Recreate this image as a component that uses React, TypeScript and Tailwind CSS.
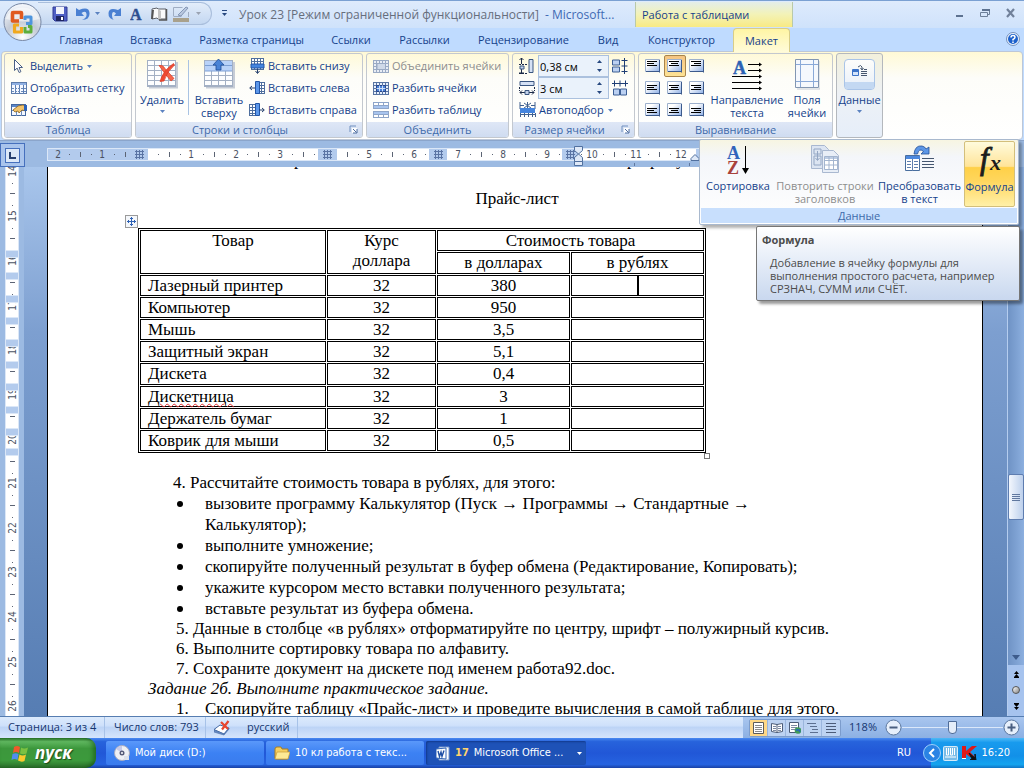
import type { ReactNode } from 'react';

const UI = "font-['Open_Sans','Noto_Sans',sans-serif]";
const DOC = "font-['Liberation_Serif',serif]";
const TASK = "font-['DejaVu_Sans_Condensed','DejaVu_Sans',sans-serif]";

/* ---------- small shared drawings ---------- */

function Caret({ color = '#5b82c0' }: { color?: string }) {
  return (
    <svg width="5" height="3" viewBox="0 0 5 3" aria-hidden="true" className="shrink-0">
      <path d="M0 0h5L2.5 3z" fill={color} />
    </svg>
  );
}

function Launcher() {
  return (
    <svg width="9" height="9" viewBox="0 0 9 9" aria-hidden="true">
      <path d="M1 7V1h6" stroke="#6f8fbf" fill="none" />
      <path d="M3 3h5v5H3z" fill="#fff" />
      <path d="M4 4l3.5 3.5M8 4v4H4" stroke="#4a6a9f" fill="none" />
    </svg>
  );
}

function lines(from: number, to: number, step: number) {
  const out: number[] = [];
  for (let v = from; v <= to; v += step) out.push(v);
  return out;
}

function GridArt({ x, y, w, h, cx, cy, stroke = '#8aa0bd', fill = '#fff' }: {
  x: number; y: number; w: number; h: number; cx: number; cy: number; stroke?: string; fill?: string;
}) {
  return (
    <g>
      <rect x={x + 0.5} y={y + 0.5} width={w} height={h} fill={fill} stroke={stroke} />
      {lines(x + 0.5 + cx, x + w, cx).map((v) => <path key={'v' + v} d={`M${v} ${y + 0.5}v${h}`} stroke={stroke} />)}
      {lines(y + 0.5 + cy, y + h, cy).map((v) => <path key={'h' + v} d={`M${x + 0.5} ${v}h${w}`} stroke={stroke} />)}
    </g>
  );
}

function Icon({ w = 16, h = 16, children }: { w?: number; h?: number; children: ReactNode }) {
  return <svg width={w} height={h} viewBox={`0 0 ${w} ${h}`} fill="none" aria-hidden="true" className="shrink-0">{children}</svg>;
}

/* ---------- ribbon icons ---------- */

const CursorIcon = () => (
  <Icon><path d="M3.5 1.5v11l2.6-2.4 2 4.4 1.8-.8-1.9-4.2h3.5z" fill="#fff" stroke="#4a5f86" /></Icon>
);
const ShowGridIcon = () => (
  <Icon>
    <rect x=".5" y="2.5" width="15" height="11" fill="#f4f8ff" stroke="#5d7cab" />
    <path d="M1 3h14v2H1z" fill="#8fb0e2" />
    <path d="M4.500 5v9M8.500 5v9M12.500 5v9" stroke="#5a7db4" /><path d="M1 8.500h14M1 11.500h14" stroke="#6c8cba" strokeDasharray="2 1" />
  </Icon>
);
const PropertiesIcon = () => (
  <Icon>
    <rect x=".5" y="2.500" width="14" height="11" fill="#f4f8ff" stroke="#44689f" />
    <path d="M1 3h14v2H1z" fill="#5a86c8" />
    <path d="M1 8.500h14M5.500 5v9M10.500 5v9" stroke="#6c8cba" />
    <path d="M2 8l5-4 5-1 3 1v5l-4-1-3 3-1-2-3 1z" fill="#f3c46b" stroke="#8b6420" strokeWidth=".8" />
    <path d="M13 3h3v6h-3z" fill="#2d63b8" />
  </Icon>
);
const DeleteTableIcon = () => (
  <Icon w={31} h={31}>
    <path d="M2 28.500h28V3" stroke="#c6ccd6" strokeWidth="2" />
    <GridArt x={0} y={1} w={28} h={26} cx={7} cy={5} stroke="#a3b0c4" fill="#fdfeff" />
    <path d="M12 6.500q4-1 6 3l9 10-3 2.500q-6-7-12-15.500z" fill="#f4664c" stroke="#dc3a22" strokeWidth=".7" />
    <path d="M26.500 4.500l1 1.500q-8 7-10.500 16l-4 .5q3-11 13.500-18z" fill="#ee4a33" stroke="#dc3a22" strokeWidth=".7" />
  </Icon>
);
const InsertAboveIcon = () => (
  <Icon w={31} h={31}>
    <path d="M2 28.500h28V3" stroke="#c6ccd6" strokeWidth="2" />
    <GridArt x={0} y={1} w={28} h={26} cx={7} cy={5} stroke="#a3b0c4" fill="#fdfeff" />
    <path d="M1 2h27v10H1z" fill="#b9d2f8" /><path d="M1 6.500h27M1 12h27" stroke="#7c9fd4" />
    <path d="M14.500 0l5.500 6h-3v5h-5V6H9z" fill="#4a83d6" stroke="#1e4c98" strokeWidth=".8" />
  </Icon>
);
const InsertBelowIcon = () => (
  <Icon>
    <GridArt x={2} y={0} w={12} h={11} cx={3} cy={3} stroke="#4f6f9e" />
    <path d="M2 6h13v4H2z" fill="#4585de" stroke="#2457a8" />
    <path d="M8.500 11v4M6.500 13l2 2.500 2-2.500" stroke="#26406d" />
  </Icon>
);
const InsertLeftIcon = () => (
  <Icon>
    <GridArt x={6} y={2} w={9} h={11} cx={3} cy={3} stroke="#4f6f9e" />
    <path d="M6.500 1.500h4v12h-4z" fill="#5d98ea" stroke="#2457a8" />
    <path d="M6 8H1M3 6L.7 8 3 10" stroke="#26406d" />
  </Icon>
);
const InsertRightIcon = () => (
  <Icon>
    <GridArt x={0} y={2} w={9} h={11} cx={3} cy={3} stroke="#4f6f9e" />
    <path d="M6.500 1.500h4v12h-4z" fill="#5d98ea" stroke="#2457a8" />
    <path d="M10 8h5M13 6l2.300 2L13 10" stroke="#26406d" />
  </Icon>
);
const MergeIcon = () => (
  <Icon><GridArt x={0} y={2} w={15} h={12} cx={3} cy={3} stroke="#9aaac4" fill="#e8edf5" /><path d="M4 5.500h8.500v6H4z" fill="#cfd9e8" stroke="#9aaac4" /></Icon>
);
const SplitCellsIcon = () => (
  <Icon><GridArt x={0} y={2} w={15} h={12} cx={3} cy={3} stroke="#5874a2" fill="#e8f0fb" /><path d="M3.500 5.500h9v6h-9z" fill="#4a82d8" stroke="#27468a" /><path d="M6.500 5.500v6M9.500 5.500v6M3.500 8.500h9" stroke="#cfe0fa" /></Icon>
);
const SplitTableIcon = () => (
  <Icon><GridArt x={0} y={0} w={15} h={6} cx={5} cy={3} stroke="#8ea5c9" /><GridArt x={0} y={9} w={15} h={6} cx={5} cy={3} stroke="#8ea5c9" /><path d="M1 4h14v2H1zM1 10h14v2H1z" fill="#a8c4ee" /></Icon>
);
const RowHeightIcon = () => (
  <Icon>
    <path d="M10 1.500h4v13h-4z" fill="#d5e1f4" stroke="#3a5680" />
    <path d="M2.500 0v6M.5 2l2-2 2 2M2.500 10v6M.5 14l2 2 2-2" stroke="#1c2b48" />
    <path d="M0 6.500h9M0 15.500h9" stroke="#1c2b48" strokeDasharray="2 1" />
    <path d="M1 8h4v3H1z" fill="#c3d2ea" stroke="#3a5680" />
  </Icon>
);
const ColWidthIcon = () => (
  <Icon>
    <path d="M1 1.500h14v4H1z" fill="#d5e1f4" stroke="#3a5680" />
    <path d="M1 12.500h5M3 10.500l-2 2 2 2M10 12.500h5M13 10.500l2 2-2 2" stroke="#1c2b48" />
    <path d="M.5 7v4M15.500 7v4" stroke="#1c2b48" strokeDasharray="2 1" />
    <path d="M6 10.500h4v4H6z" fill="#c3d2ea" stroke="#3a5680" />
  </Icon>
);
const AutoFitIcon = () => (
  <Icon w={17}>
    <path d="M1 0v7M16 0v7M1 3.500h4M12 3.500h4M8.500 0v7M5 1l7 5M12 1L5 6" stroke="#41618f" />
    <path d="M1 6h15v5H1z" fill="#4585de" />
    <path d="M1.500 11v4M5.500 11v4M9.500 11v4M13.500 11v4M16.500 11v4M1 12.500h16" stroke="#41618f" />
  </Icon>
);
const DistributeRowsIcon = () => (
  <Icon>
    <path d="M.5 2h7v5h-7zM.5 9h7v5h-7z" fill="#bcd1f2" stroke="#3d5f94" />
    <path d="M12.500 0v16M9.500 2.500h6M9.500 8h6M9.500 13.500h6" stroke="#1f3e75" />
  </Icon>
);
const DistributeColsIcon = () => (
  <Icon>
    <path d="M1.500 9h6v6h-6zM8.500 9h6v6h-6z" fill="#bcd1f2" stroke="#3d5f94" />
    <path d="M0 3.500h16M2.500.5v6M8 .5v6M13.500.5v6" stroke="#1f3e75" />
  </Icon>
);

function AlignIcon({ row, col }: { row: number; col: number }) {
  const y0 = [2.5, 4.5, 5.5][row];
  const widths = [10, 7, 10];
  return (
    <Icon w={16} h={14}>
      <defs><linearGradient id={`al${row}${col}`} x1="0" y1="0" x2="1" y2="1"><stop offset=".3" stopColor="#fff" /><stop offset="1" stopColor="#8fb0e6" /></linearGradient></defs>
      <path d="M.5.500h14v12H.5z" fill={`url(#al${row}${col})`} stroke="#9db0cc" />
      <path d="M14.500 1v12.500M1 12.500h14" stroke="#3c5a8c" />
      {widths.map((w, i) => {
        const x = col === 0 ? 2 : col === 1 ? Math.floor(7.5 - w / 2) : 12 - w;
        return <path key={i} d={`M${x} ${y0 + i * 2}h${w}`} stroke="#000" />;
      })}
    </Icon>
  );
}
const DirectionIcon = () => (
  <Icon w={31} h={32}>
    <text x="1" y="15" fontFamily="Liberation Serif" fontWeight="bold" fontSize="18" fill="#2c62b4" stroke="#2c62b4" strokeWidth=".4">A</text>
    <path d="M16 5.500h13M16 11.500h13M0 17.500h29M0 23.500h29M0 29.500h29" stroke="#000" />
    {[5.5, 11.5, 17.5, 23.5, 29.5].map((y) => <path key={y} d={`M27 ${y - 2}l3 2-3 2z`} fill="#000" />)}
  </Icon>
);
const MarginsIcon = () => (
  <Icon w={25} h={31}>
    <path d="M2 30h23V2" stroke="#c6ccd6" />
    <path d="M.5.500h23v28H.5z" fill="#f5f8fd" stroke="#8296b2" />
    <path d="M5.500 1v27M18.500 1v27M1 5.500h22M1 22.500h22" stroke="#8aa9d8" />
  </Icon>
);
const DataIcon = () => (
  <span className="flex h-[31px] w-[31px] flex-col overflow-hidden rounded-[4px] border border-[#a9c4e8] bg-gradient-to-b from-[#fdfdfb] to-[#e8eff9]">
    <span className="flex flex-1 items-center justify-center">
      <Icon w={16} h={12}>
        <path d="M.5 4.500h6v6h-6z" fill="#d4e4fb" stroke="#3c73c8" /><path d="M1 5h6v2H1z" fill="#3c73c8" />
        <path d="M6 2q3-3 4 0v2M8.500 3l1.500 2 1.500-2" stroke="#45566f" />
        <path d="M9 6.500h6M9 8.500h6M9 10.500h6M12 4.500h3" stroke="#45566f" />
      </Icon>
    </span>
    <span className="h-[7px] bg-[#c3d8f2]" />
  </span>
);
const SortIcon = () => (
  <Icon w={24} h={32}>
    <text x="1" y="14" fontFamily="Liberation Serif" fontWeight="bold" fontSize="18" fill="#3263bb">A</text>
    <text x="1" y="29" fontFamily="Liberation Serif" fontWeight="bold" fontSize="18" fill="#a8423c">Z</text>
    <path d="M19.500 1v24" stroke="#000" /><path d="M16 23h7l-3.500 6z" fill="#000" />
  </Icon>
);
const RepeatRowsIcon = () => (
  <Icon w={29} h={29}>
    <path d="M.5.500h13l4 4v19H.5z" fill="#dce5f2" stroke="#a9b8d0" />
    <path d="M3 4h7v5H3zM3 11h7v9H3zM6.500 6v9M4.500 13l2 2.500 2-2.500" stroke="#94a7c4" />
    <path d="M11.500 5.500h11l5 5v17h-16z" fill="#e8eef7" stroke="#a9b8d0" />
    <path d="M14 14h12v10H14z" fill="#fff" /><path d="M14 11h12v3H14z" fill="#bccce4" />
    <path d="M13.500 11.500h13v13h-13zM13.500 15.500h13M13.500 20h13M18 12v12M22.500 12v12" stroke="#a3b5cf" />
  </Icon>
);
const ConvertIcon = () => (
  <Icon w={29} h={29}>
    <path d="M9 9Q10 0 17 1q3 .5 4 3l3-2v7h-8l2.500-2.500Q14 2.500 12.500 9z" fill="#5c96e6" stroke="#245097" strokeWidth=".8" />
    <path d="M.5 10.500h14v15H.5z" fill="#fff" stroke="#496e9e" /><path d="M1 11h14v3H1z" fill="#4c88de" />
    <path d="M2 16.500h4M9 16.500h4M2 19.500h4M9 19.500h4M2 22.500h4M9 22.500h4M7.500 14v12" stroke="#5f7fae" />
    <path d="M17 13.500h12M17 16.500h12M17 19.500h12M17 22.500h12" stroke="#45566f" />
  </Icon>
);
const FormulaIcon = () => (
  <Icon w={30} h={34}>
    <text x="5" y="23" fontFamily="Liberation Serif" fontStyle="italic" fontSize="31" fill="#1c1c1c" stroke="#1c1c1c" strokeWidth=".9">f</text>
    <text x="15" y="24" fontFamily="Liberation Serif" fontStyle="italic" fontWeight="bold" fontSize="22" fill="#1c1c1c">x</text>
  </Icon>
);

/* ---------- title bar ---------- */

function OfficeOrb() {
  return (
    <button type="button" aria-label="Office" className="absolute left-[3px] top-[2px] z-20 h-[40px] w-[40px] rounded-full">
      <svg width="40" height="40" viewBox="0 0 40 40" aria-hidden="true">
        <defs>
          <radialGradient id="orb" cx=".5" cy=".9" r=".85"><stop offset="0" stopColor="#fff" /><stop offset=".5" stopColor="#c3cad6" /><stop offset="1" stopColor="#f2f5fa" /></radialGradient>
        </defs>
        <circle cx="19.500" cy="20" r="18.500" fill="url(#orb)" stroke="#7888a5" />
        <path d="M3 17a17 15 0 0 1 33 0q-16 5-33 0z" fill="#fff" opacity=".5" />
        <g fill="none" strokeWidth="3.600" strokeLinejoin="round">
          <path d="M16 19h-6.500v-8q0-.5.5-.5h8q.5 0 .5.5v6" stroke="#e05a20" />
          <path d="M22 18v-3h6v6.500h-5" stroke="#4f95dd" strokeWidth="3" />
          <path d="M16 23h-4.500v7h7v-5" stroke="#f0a81f" strokeWidth="3.200" />
          <path d="M22 25v5h6v-5.500h-3" stroke="#5cae3c" strokeWidth="3" />
        </g>
      </svg>
    </button>
  );
}

function QuickAccess() {
  return (
    <div className="ml-[38px] flex h-[23px] w-[174px] items-center rounded-r-full border border-l-0 border-[#a9bedc] bg-gradient-to-b from-[#e3edfa] to-[#c3d7f1] pl-[14px]">
      <button type="button" aria-label="Сохранить" className="flex w-[24px] justify-start">
        <Icon><path d="M1 1h14v14H3l-2-2z" fill="#4f5fc4" stroke="#303a94" /><path d="M4 1h8v7H4z" fill="#f1f3fb" /><path d="M4 10h8v5H4z" fill="#1e2561" /><path d="M9 11h2v3H9z" fill="#fff" /></Icon>
      </button>
      <button type="button" aria-label="Отменить" className="flex w-[19px]">
        <Icon w={14} h={14}><path d="M0 1v8h8L5.500 6Q10 3 10.500 7T6 13Q14 13 13.500 6T3 3z" fill="#4a80d2" /></Icon>
      </button>
      <button type="button" aria-label="Список отмены" className="flex w-[13px]"><Caret /></button>
      <button type="button" aria-label="Повторить" className="flex w-[22px]">
        <Icon w={13} h={14}><path d="M13 1v8H6l2-2.500Q4 3 4 8t3 5Q0 12 .5 6T10 3z" fill="#4a80d2" /></Icon>
      </button>
      <button type="button" aria-label="Шрифт" className="flex w-[21px]">
        <Icon w={14} h={20}><text x="0" y="16" fontFamily="Liberation Serif" fontWeight="bold" fontSize="16" fill="#2d4e8f" stroke="#2d4e8f" strokeWidth=".4">A</text></Icon>
      </button>
      <button type="button" aria-label="Справочник" className="flex w-[22px]">
        <Icon w={17} h={14}><path d="M1 2l5-1 1 1h8v10H7l-1-1-5 1z" fill="#fafafa" stroke="#5d6169" /><path d="M7 2l3 2v9l-3-1z" fill="#c4c4c4" /><path d="M15.500 2v11H8" stroke="#555" strokeWidth="1.500" /><path d="M1 12l1-9" stroke="#555" strokeWidth="2" /></Icon>
      </button>
      <button type="button" aria-label="Цвет границы" className="flex w-[23px]">
        <Icon w={17} h={16}><path d="M.5 10V1.500h9M.5 10.500h8M15.500 6v5" stroke="#9fadc3" /><path d="M5 9l8-8 2 1-7 8z" fill="#b9c8e0" stroke="#8497b6" /><path d="M0 12h16v4H0z" fill="#a9a18c" /></Icon>
      </button>
      <Caret color="#9aa3b2" />
    </div>
  );
}

function TitleBar() {
  return (
    <header className="flex h-[28px] items-start border-t border-[#7aa0d2] bg-gradient-to-b from-[#deebfc] to-[#cfe2fb] pt-[1px]">
      <QuickAccess />
      <button type="button" aria-label="Настройка панели" className="ml-[7px] flex h-[22px] w-[10px] flex-col items-center justify-center gap-[2px]">
        <span className="h-px w-[5px] bg-[#27487f]" /><Caret color="#27487f" />
      </button>
      <h1 className={`${UI} ml-[10px] flex w-[396px] gap-[6px] whitespace-nowrap text-[12px] leading-[26px] text-[#666e7c]`}>
        <span>Урок 23 [Режим ограниченной функциональности]</span><span className="text-[#3f6ab4]">- Microsoft...</span>
      </h1>
      <div className={`${UI} h-[25px] w-[158px] border-x border-[#b9c9a9] bg-gradient-to-b from-[#e4eee9] via-[#f3f2b6] to-[#f8ea83] pl-[6px] text-[11px] leading-[26px] text-[#15428b]`}>Работа с таблицами</div>
      <div className="ml-auto flex h-[22px] items-center gap-[16px] pr-[8px]">
        <button type="button" aria-label="Свернуть"><Icon w={9} h={10}><path d="M1 8h7" stroke="#5d7290" strokeWidth="2" /></Icon></button>
        <button type="button" aria-label="Восстановить"><Icon w={10} h={10}><path d="M2.500 2.500h7v4h-2M.5 4.500h7v4h-7z" stroke="#6c7f99" /><path d="M2 2h8" stroke="#5d7290" strokeWidth="2" /></Icon></button>
        <button type="button" aria-label="Закрыть"><Icon w={10} h={10}><path d="M1 1l7 8M8 1L1 9" stroke="#71819a" strokeWidth="2.200" /></Icon></button>
      </div>
    </header>
  );
}

/* ---------- tabs ---------- */

const tabs = [
  ['Главная', 'w-[70px]'], ['Вставка', 'w-[70px]'], ['Разметка страницы', 'w-[131px]'], ['Ссылки', 'w-[68px]'],
  ['Рассылки', 'w-[79px]'], ['Рецензирование', 'w-[119px]'], ['Вид', 'w-[50px]'], ['Конструктор', 'w-[97px]'],
];

function Tabs() {
  return (
    <nav className={`${UI} flex h-[23px] bg-[#bfdbff] pl-[46px] text-[11px] leading-[24px] text-[#15428b]`}>
      {tabs.map(([t, w]) => <button key={t} type="button" className={`${w} whitespace-nowrap text-center`}>{t}</button>)}
      <button type="button" className="relative ml-[3px] h-[24px] w-[57px] rounded-t-[4px] border border-b-0 border-[#d8cd88] bg-gradient-to-b from-[#fff5a4] to-[#fffbd9] leading-[22px]">Макет</button>
      <button type="button" aria-label="Справка" className="ml-auto mr-[4px] mt-[3px] h-[15px]">
        <Icon w={14} h={14}><circle cx="7" cy="7" r="6.500" fill="#e9f1fc" stroke="#7692bd" /><circle cx="7" cy="7" r="5" fill="#1d61cb" /><path d="M5 5.500q0-2 2-2t2 1.700Q9 6.500 7 7.500v1M7 9.500v1.500" stroke="#fff" strokeWidth="1.500" /></Icon>
      </button>
    </nav>
  );
}

/* ---------- ribbon ---------- */

function Group({ title, width, launcher, children }: { title: string; width: string; launcher?: boolean; children: ReactNode }) {
  return (
    <section className={`${width} flex h-[85px] shrink-0 flex-col overflow-hidden rounded-[3px] border border-[#c3c8cf]`}>
      <div className="flex flex-1 pt-px">{children}</div>
      <div className="relative h-[15px] bg-gradient-to-b from-[#dfe7f6] to-[#cfdcf1] text-center leading-[15px] text-[#3e6aaa]">
        <span className={launcher ? 'pr-[18px]' : ''}>{title}</span>
        {launcher && <button type="button" aria-label={`${title}: параметры`} className="absolute right-[4px] top-[3px]"><Launcher /></button>}
      </div>
    </section>
  );
}

function Row({ icon, label, caret, disabled }: { icon: ReactNode; label: string; caret?: boolean; disabled?: boolean }) {
  return (
    <button type="button" disabled={disabled} className={`flex h-[22px] items-center gap-[3px] whitespace-nowrap ${disabled ? 'text-[#8d8d8d]' : ''}`}>
      {icon}<span>{label}</span>{caret && <span className="pl-[1px]"><Caret /></span>}
    </button>
  );
}

function Big({ icon, label, width, caret, disabled }: { icon: ReactNode; label: string[]; width: string; caret?: boolean; disabled?: boolean }) {
  return (
    <button type="button" disabled={disabled} className={`${width} flex shrink-0 flex-col items-center whitespace-nowrap pt-[4px] leading-[13px] ${disabled ? 'text-[#8d8d8d]' : ''}`}>
      <span className="flex h-[34px] items-start">{icon}</span>
      {label.map((l) => <span key={l}>{l}</span>)}
      {caret && <span className="pt-[4px]"><Caret /></span>}
    </button>
  );
}

function Spin({ label, value }: { label: string; value: string }) {
  return (
    <div className="flex h-[22px] w-[71px] items-center border border-[#abc1de] bg-[#eaf2fb]">
      <input aria-label={label} defaultValue={value} className="h-[18px] w-[58px] bg-transparent pl-px text-[11px] text-black outline-none" />
      <span className="flex flex-col gap-[6px]">
        <button type="button" aria-label="Больше" className="h-[3px]"><svg width="5" height="3" viewBox="0 0 5 3" className="block"><path d="M0 3h5L2.500 0z" fill="#27487f" /></svg></button>
        <button type="button" aria-label="Меньше" className="flex h-[3px]"><Caret color="#27487f" /></button>
      </span>
    </div>
  );
}

function Ribbon() {
  return (
    <div className={`${UI} mx-[1px] flex h-[89px] gap-[3px] rounded-[4px] border border-[#bcc7d8] bg-gradient-to-b from-[#fff9d5] via-[#fdfdf9] via-30% to-white p-px pl-[2px] text-[11px] text-[#15428b]`}>
      <Group title="Таблица" width="w-[128px]">
        <div className="flex flex-col pl-[6px]">
          <Row icon={<CursorIcon />} label="Выделить" caret />
          <Row icon={<ShowGridIcon />} label="Отобразить сетку" />
          <Row icon={<PropertiesIcon />} label="Свойства" />
        </div>
      </Group>
      <Group title="Строки и столбцы" width="w-[228px]" launcher>
        <Big icon={<DeleteTableIcon />} label={['Удалить']} width="w-[52px]" caret />
        <span className="mt-[5px] h-[55px] w-px bg-[#a9c3e3]" />
        <Big icon={<InsertAboveIcon />} label={['Вставить', 'сверху']} width="w-[60px]" />
        <div className="flex flex-col">
          <Row icon={<InsertBelowIcon />} label="Вставить снизу" />
          <Row icon={<InsertLeftIcon />} label="Вставить слева" />
          <Row icon={<InsertRightIcon />} label="Вставить справа" />
        </div>
      </Group>
      <Group title="Объединить" width="w-[143px]">
        <div className="flex flex-col pl-[6px]">
          <Row icon={<MergeIcon />} label="Объединить ячейки" disabled />
          <Row icon={<SplitCellsIcon />} label="Разбить ячейки" />
          <Row icon={<SplitTableIcon />} label="Разбить таблицу" />
        </div>
      </Group>
      <Group title="Размер ячейки" width="w-[123px]" launcher>
        <div className="flex flex-col pl-[6px]">
          <div className="flex h-[22px] items-center gap-[3px]"><RowHeightIcon /><Spin label="Высота строки" value="0,38 см" /><button type="button" aria-label="Выровнять высоту строк"><DistributeRowsIcon /></button></div>
          <div className="flex h-[22px] items-center gap-[3px]"><ColWidthIcon /><Spin label="Ширина столбца" value="3 см" /><button type="button" aria-label="Выровнять ширину столбцов"><DistributeColsIcon /></button></div>
          <Row icon={<AutoFitIcon />} label="Автоподбор" caret />
        </div>
      </Group>
      <Group title="Выравнивание" width="w-[195px]">
        <div className="grid h-[66px] w-[69px] shrink-0 grid-cols-[22px_22px_22px] grid-rows-3 pl-[3px]">
          {[0, 1, 2].flatMap((r) => [0, 1, 2].map((c) => (
            <button key={`${r}${c}`} type="button" aria-label={`Выравнивание ${r + 1}.${c + 1}`} className={`flex items-center justify-center ${r === 0 && c === 1 ? 'rounded-[2px] border border-[#a8854b] bg-gradient-to-b from-[#f5c583] to-[#fde394]' : ''}`}><AlignIcon row={r} col={c} /></button>
          )))}
        </div>
        <Big icon={<DirectionIcon />} label={['Направление', 'текста']} width="w-[78px]" />
        <Big icon={<MarginsIcon />} label={['Поля', 'ячейки']} width="w-[42px]" />
      </Group>
      <section className="flex h-[85px] w-[47px] justify-center rounded-[3px] border border-[#b4b8bd] bg-gradient-to-b from-[#f2f0dc] via-[#edf1f6] to-[#e6eef9] pt-px">
        <Big icon={<DataIcon />} label={['Данные']} width="w-[45px]" caret />
      </section>
    </div>
  );
}

function DataPanel() {
  return (
    <div className={`${UI} absolute right-[5px] top-[139px] z-30 flex h-[86px] w-[320px] flex-col rounded-[2px] border border-[#a9b9ce] bg-gradient-to-b from-[#f7f5e2] via-[#f4f6fa] via-20% to-white p-px text-[11px] text-[#15428b] shadow-[3px_3px_3px_rgba(0,0,0,0.3)]`}>
      <div className="flex flex-1">
        <Big icon={<SortIcon />} label={['Сортировка']} width="w-[74px]" />
        <Big icon={<RepeatRowsIcon />} label={['Повторить строки', 'заголовков']} width="w-[100px]" disabled />
        <Big icon={<ConvertIcon />} label={['Преобразовать', 'в текст']} width="w-[89px]" />
        <div className="flex h-[66px] w-[51px] justify-center rounded-[2px] border border-[#d3bf7b] bg-[linear-gradient(#fffbdc,#ffe49a_38%,#ffd048_40%,#ffd65c_60%,#fff0a8)]">
          <Big icon={<FormulaIcon />} label={['Формула']} width="w-[49px]" />
        </div>
      </div>
      <div className="h-[15px] bg-[#c8dffd] text-center leading-[15px] text-[#3e6aaa]">Данные</div>
    </div>
  );
}

function Tip() {
  return (
    <div role="tooltip" className={`${UI} absolute right-[4px] top-[226px] z-40 h-[75px] w-[264px] rounded-[2px] border border-[#767676] bg-gradient-to-b from-white to-[#c9d8ef] px-[5px] pt-[6px] text-[11px] leading-[13px] text-[#4c4c4c] shadow-[3px_3px_3px_rgba(0,0,0,0.4)]`}>
      <p className="font-bold">Формула</p>
      <p className="whitespace-nowrap pl-[8px] pt-[10px]">Добавление в ячейку формулы для<br />выполнения простого расчета, например<br />СРЗНАЧ, СУММ или СЧЁТ.</p>
    </div>
  );
}

/* ---------- rulers ---------- */

const hNumbers: [string, number][] = [['2', 58], ['1', 102], ['1', 191], ['2', 236], ['3', 280], ['5', 369], ['6', 414], ['7', 458], ['8', 503], ['9', 547], ['10', 592], ['11', 636], ['12', 681]];
const hMarks = [139, 327, 438, 570];
const hidden = (x: number) => hMarks.some((m) => Math.abs(m - x) < 10);

function HRuler() {
  const ticks: number[] = lines(80, 680, 44.5);
  const dots = lines(69, 690, 44.5).concat(lines(91, 690, 44.5));
  return (
    <div className="flex h-[27px] shrink-0 border-t border-[#8ba5cb] bg-[#9cbae2]">
      <button type="button" aria-label="Тип табуляции" className="mt-[2px] flex h-[24px] w-[25px] items-center justify-center border border-[#4670bd] bg-[#a9c4ec]">
        <span className="flex h-[15px] w-[15px] items-center justify-center border border-[#4670bd] bg-[#dce8f8]"><Icon w={7} h={7}><path d="M1 0v6h6" stroke="#27406f" strokeWidth="2" /></Icon></span>
      </button>
      <svg width="970" height="26" viewBox="25 141 970 26" className="overflow-hidden" aria-hidden="true">
        <rect x="47.500" y="148.500" width="770" height="12" fill="#b3cbed" stroke="#dbe7f7" />
        {[[148, 170], [337, 92], [447, 115], [579, 117]].map(([x, w]) => <rect key={x} x={x} y="149" width={w} height="11" fill="#fff" />)}
        {hMarks.map((x) => <path key={x} d={`M${x - 2.5} 150v9M${x + 0.5} 150v9M${x + 3.5} 150v9M${x - 4} 151.500h9M${x - 4} 154.500h9M${x - 4} 157.500h9`} stroke="#5a74a4" fill="none" />)}
        {ticks.filter((x) => !hidden(x)).map((x) => <path key={x} d={`M${Math.round(x) + 0.5} 152v5`} stroke="#5c6474" />)}
        {dots.filter((x) => !hidden(x)).map((x) => <rect key={x} x={Math.round(x)} y="154" width="1" height="1" fill="#5c6474" />)}
        {hNumbers.map(([n, x]) => <text key={x} x={x} y="158" textAnchor="middle" fontSize="10" fontFamily="DejaVu Sans Condensed, DejaVu Sans" fill="#4a5263">{n}</text>)}
        <path d="M574.500 146.500h8v4l-4 3.500-4-3.500zM574.500 161.500v-4l4-3.500 4 3.500v4zM574.500 161.500h8v4h-8z" fill="#dfe9f8" stroke="#51709f" />
        <path d="M691 160.500v-2l4-4 4 4v2z" fill="#dfe9f8" stroke="#51709f" />
        <path d="M634.500 163v3M689.500 163v3" stroke="#5f789f" />
      </svg>
    </div>
  );
}

function VRuler() {
  const numbers = lines(14, 26, 1).map((n) => [n, Math.round(171 + (n - 14) * 44.6)] as const);
  return (
    <div className="w-[24px] shrink-0 bg-[#9cbae2]">
      <svg width="24" height="560" viewBox="0 167 24 560" aria-hidden="true">
        <rect x="5" y="160" width="14" height="570" fill="#dbe7f7" />
        <rect x="6" y="160" width="12" height="570" fill="#fff" />
        {lines(183, 720, 44.6).concat(lines(205, 720, 44.6)).map((y) => <rect key={y} x="12" y={Math.round(y)} width="1" height="1" fill="#5c6474" />)}
        {lines(193, 720, 44.6).map((y) => <path key={y} d={`M10 ${Math.round(y) + 0.5}h5`} stroke="#5c6474" />)}
        {numbers.map(([n, y]) => <text key={n} transform={`translate(16 ${y}) rotate(-90)`} textAnchor="middle" fontSize="10" fontFamily="DejaVu Sans Condensed, DejaVu Sans" fill="#4a5263">{n}</text>)}
        {[250, 272, 295, 317, 339, 361, 383, 406, 428, 448].map((y) => <rect key={y} x="5.500" y={y + 0.5} width="13" height="7" fill="#b3cbed" stroke="#dbe7f7" />)}
      </svg>
    </div>
  );
}

/* ---------- document ---------- */

const goods = [
  ['Лазерный принтер', '380'], ['Компьютер', '950'], ['Мышь', '3,5'], ['Защитный экран', '5,1'],
  ['Дискета', '0,4'], ['Дискетница', '3'], ['Держатель бумаг', '1'], ['Коврик для мыши', '0,5'],
];
const CELL = 'border border-black p-0 font-normal';

function PriceTable() {
  return (
    <div className="relative ml-[90px] mt-[19px] w-[568px]">
      <button type="button" aria-label="Переместить таблицу" className="absolute -left-[13px] -top-[13px] flex h-[13px] w-[13px] items-center justify-center border border-[#9a9a9a] bg-[#f4f7fb]">
        <Icon w={9} h={9}><path d="M4.500 0v9M0 4.500h9M3 1.500h3M3 7.500h3M1.500 3v3M7.500 3v3" stroke="#2f62b5" /></Icon>
      </button>
      <table className="w-full table-fixed border-separate border-spacing-px border border-black text-center leading-[20px]">
        <colgroup><col className="w-[186px]" /><col className="w-[109px]" /><col className="w-[133px]" /><col className="w-[133px]" /></colgroup>
        <thead>
          <tr>
            <th rowSpan={2} className={`${CELL} align-top`}>Товар</th>
            <th rowSpan={2} className={`${CELL} align-top`}>Курс<br />доллара</th>
            <th colSpan={2} className={CELL}><div className="h-[19px]">Стоимость товара</div></th>
          </tr>
          <tr><th className={CELL}><div className="h-[20px]">в долларах</div></th><th className={CELL}><div className="h-[20px]">в рублях</div></th></tr>
        </thead>
        <tbody>
          {goods.map(([name, price], i) => {
            const h = i === 4 ? 'h-[20px]' : 'h-[19px]';
            return (
              <tr key={name}>
                <td className={`${CELL} pl-[7px]! text-left`}>
                  <div className={h}><span className={name === 'Дискетница' ? 'underline decoration-[#e03030] decoration-wavy decoration-1 underline-offset-1' : ''}>{name}</span></div>
                </td>
                <td className={CELL}><div className={h}>32</div></td>
                <td className={CELL}><div className={h}>{price}</div></td>
                <td className={CELL}>{i === 0 && <span className="mx-auto block h-[19px] w-[2px] bg-black" />}</td>
              </tr>
            );
          })}
        </tbody>
      </table>
      <span className="absolute -bottom-[6px] -right-[4px] h-[6px] w-[6px] border border-[#777] bg-white" />
    </div>
  );
}

const bullets: ReactNode[] = [
  <>вызовите программу Калькулятор (Пуск → Программы → Стандартные →<br />Калькулятор);</>,
  'выполните умножение;',
  'скопируйте полученный результат в буфер обмена (Редактирование, Копировать);',
  'укажите курсором место вставки полученного результата;',
  'вставьте результат из буфера обмена.',
];

function Page() {
  return (
    <main className={`${DOC} relative w-[936px] shrink-0 overflow-hidden whitespace-nowrap border-x border-black bg-white text-[17px] text-black`}>
      <div className="flex h-[3px] items-end overflow-hidden leading-[20px]">
        <span className="ml-[246px] w-[333px]">р</span><span className="w-[23px]">р</span><span className="w-[26px]">р</span><span>у</span>
      </div>
      <p className="pt-[19px] pl-[4px] text-center leading-[20px]">Прайс-лист</p>
      <PriceTable />
      <div className="pt-[20px]">
        <p className="pl-[125px] leading-[20px]">4. Рассчитайте стоимость товара в рублях, для этого:</p>
        <ul className="leading-[21px]">
          {bullets.map((b, i) => (
            <li key={i} className="flex pl-[128px]">
              <svg width="29" height="21" viewBox="0 0 29 21" className="shrink-0" aria-hidden="true"><circle cx="4" cy="11" r="3" fill="#000" /></svg>
              <span>{b}</span>
            </li>
          ))}
        </ul>
        <p className="pl-[128px] leading-[20px]">5. Данные в столбце «в рублях» отформатируйте по центру, шрифт – полужирный курсив.</p>
        <p className="pl-[128px] leading-[20px]">6. Выполните сортировку товара по алфавиту.</p>
        <p className="pl-[128px] leading-[20px]">7. Сохраните документ на дискете под именем работа92.doc.</p>
        <p className="pl-[100px] italic leading-[20px]">Задание 2б. Выполните практическое задание.</p>
        <p className="flex pl-[128px] leading-[20px]"><span className="w-[29px]">1.</span>Скопируйте таблицу «Прайс-лист» и проведите вычисления в самой таблице для этого.</p>
      </div>
    </main>
  );
}

function ScrollBar() {
  return (
    <div className="ml-auto flex w-[17px] shrink-0 flex-col border-l border-[#b5cdef] bg-gradient-to-r from-[#6f93c5] to-[#8cafdf]">
      <div className="h-[307px]" />
      <div className="flex h-[46px] flex-col items-center justify-center gap-px rounded-[2px] border border-[#5e7db0] bg-gradient-to-r from-[#f3f7fd] to-[#bdd0ec]">
        {[0, 1, 2, 3].map((i) => <span key={i} className="h-px w-[8px] bg-[#60789f]" />)}
      </div>
      <div className="flex-1" />
      <button type="button" aria-label="Вниз" className="flex h-[16px] items-center justify-center"><svg width="8" height="5" viewBox="0 0 8 5"><path d="M0 0h8L4 5z" fill="#3e5c8c" /></svg></button>
      <div className="flex h-[51px] flex-col items-center justify-around bg-[#a6c3ee] py-[1px]">
        <button type="button" aria-label="Предыдущая страница" className="h-[8px]"><Icon w={5} h={7}><path d="M0 3l2.500-3L5 3zM0 6l2.500-3L5 6zM0 6h5v1H0z" fill="#000" /></Icon></button>
        <button type="button" aria-label="Выбор объекта" className="h-[8px] w-[8px] rounded-full border border-[#555] bg-gradient-to-br from-white to-[#888]" />
        <button type="button" aria-label="Следующая страница" className="h-[8px]"><Icon w={5} h={7}><path d="M0 0h5v1H0zM0 1h5L2.500 4zM0 4h5L2.500 7z" fill="#000" /></Icon></button>
      </div>
    </div>
  );
}

/* ---------- status bar ---------- */

function ViewIcon({ kind }: { kind: number }) {
  return (
    <Icon w={12} h={12}>
      {kind === 0 && <><path d="M.5.500h10v11H.5z" fill="#fff" stroke="#5b5b5b" /><path d="M2 3.500h7M2 5.500h7M2 7.500h7M2 9.500h7" stroke="#8a8a8a" /></>}
      {kind === 1 && <><path d="M.5 1.500l5.500 1 5.500-1v8l-5.500 1-5.500-1zM6 2v9" fill="#fff" stroke="#4c5c78" /><path d="M2 4.500h3M2 6.500h3M7 4.500h3M7 6.500h3M2 8.500h3M7 8.500h3" stroke="#7c8aa3" /></>}
      {kind === 2 && <><path d="M.5.500h9v10h-9z" fill="#fff" stroke="#4c5c78" /><path d="M2 3.500h6M2 5.500h6M2 7.500h4" stroke="#7c8aa3" /><circle cx="9" cy="8.500" r="3.300" fill="#3f9a5a" /><path d="M7 8h3l1 2" stroke="#2568bd" strokeWidth="1.500" /></>}
      {kind === 3 && <path d="M0 1.500h9M3 4.500h7M5 7.500h6M3 10.500h8" stroke="#5c6f90" />}
      {kind === 4 && <path d="M1 1.500h10M1 4.500h10M1 7.500h10M1 10.500h10" stroke="#4c5c78" />}
    </Icon>
  );
}

function ZoomButton({ plus }: { plus?: boolean }) {
  return (
    <button type="button" aria-label={plus ? 'Увеличить' : 'Уменьшить'} className="shrink-0">
      <Icon w={17} h={17}><circle cx="8.500" cy="8.500" r="7.500" fill="#e6effb" stroke="#5c789f" /><path d={plus ? 'M4.500 8.500h8M8.500 4.500v8' : 'M4.500 8.500h8'} stroke="#4a5f80" strokeWidth="2" /></Icon>
    </button>
  );
}

function StatusBar() {
  const cell = 'flex h-full items-center border-r border-[#a7c2e8] whitespace-nowrap';
  return (
    <footer className={`${UI} flex h-[22px] shrink-0 items-center border-t border-[#567db1] bg-[linear-gradient(#dceafc,#cfe1fb_40%,#bdd4f6_50%,#d5e5fc)] text-[11px] text-[#15366f]`}>
      <span className={`${cell} w-[105px] pl-[8px]`}>Страница: 3 из 4</span>
      <span className={`${cell} w-[101px] pl-[9px]`}>Число слов: 793</span>
      <span className={`${cell} w-[92px] gap-[17px] pl-[8px]`}>
        <Icon w={16} h={16}><path d="M0 9.500L6 5l9 3-5 6z" fill="#fff" stroke="#456aa4" /><path d="M0 10v2l10 3 5-6V8l-5 6z" fill="#6b8fc6" stroke="#456aa4" strokeWidth=".6" /><path d="M7 2l7 7M14.500 1L8 9.500" stroke="#e8452f" strokeWidth="2.200" /></Icon>
        русский
      </span>
      <div className="ml-auto flex h-full items-center bg-gradient-to-b from-[#a9c6ef] to-[#8cb0e3] pl-[6px] pr-[4px]">
        <div className="flex h-[18px] items-center rounded-[2px] border border-[#7c9ccc] bg-[#bdd3f2]">
          {[0, 1, 2, 3, 4].map((k) => <button key={k} type="button" aria-label={`Режим ${k + 1}`} className={`flex h-[16px] w-[18px] items-center justify-center border-r border-[#9bb6dd] last:border-r-0 ${k === 0 ? 'bg-[#ffd886]' : ''}`}><ViewIcon kind={k} /></button>)}
        </div>
        <span className="w-[44px] text-center">118%</span>
        <ZoomButton />
        <input aria-label="Масштаб" type="range" defaultValue="50" className="h-[16px] w-[101px] appearance-none bg-[linear-gradient(#dbe8fa,#dbe8fa)] bg-[length:100%_1px] bg-center bg-no-repeat [&::-webkit-slider-thumb]:h-[13px] [&::-webkit-slider-thumb]:w-[9px] [&::-webkit-slider-thumb]:appearance-none [&::-webkit-slider-thumb]:rounded-b-[4px] [&::-webkit-slider-thumb]:border [&::-webkit-slider-thumb]:border-[#4f6c98] [&::-webkit-slider-thumb]:bg-[#e4edf9]" />
        <ZoomButton plus />
      </div>
    </footer>
  );
}

/* ---------- taskbar ---------- */

function TaskBar() {
  const task = 'flex h-[24px] items-center gap-[5px] rounded-[2px] pl-[8px] text-left whitespace-nowrap';
  return (
    <div className={`${TASK} flex h-[30px] shrink-0 items-center bg-[linear-gradient(#4a8af0,#2763dc_12%,#2157d7_50%,#2663e0_88%,#1941a5)] text-[11px] text-white`}>
      <button type="button" className="flex h-full w-[96px] items-center gap-[6px] rounded-r-[10px] bg-[linear-gradient(#2e7a2e,#5fb75f_12%,#3c973c_35%,#3c9a3c_75%,#2b6f2b)] pl-[11px] shadow-[inset_-3px_0_4px_rgba(0,50,0,0.4)]">
        <Icon w={18} h={18}>
          <path d="M3 3q3-2 6 0L8 9Q5 7 2 9z" fill="#ef5a2b" /><path d="M10 3.500q3 2 7 0l-1.500 6q-3 1.500-6.500 0z" fill="#7cc142" />
          <path d="M1.500 10q3-1.500 6 0l-1 6q-3-2-6 0z" fill="#4f8df0" /><path d="M8.500 10.500q3 2 6.500 0L13.500 17q-3 1.500-6.500-.5z" fill="#fbc92e" />
        </Icon>
        <span className="font-['Open_Sans',sans-serif] text-[17px] font-bold italic leading-[24px] [text-shadow:1px_1px_1px_#1c4a1c]">пуск</span>
      </button>
      <div className="flex gap-[2px] pl-[10px]">
        <button type="button" className={`${task} w-[158px] bg-gradient-to-b from-[#5a98fa] via-[#3c81f3] to-[#3a7bee]`}>
          <Icon><circle cx="8" cy="8" r="7.500" fill="#eef0f5" stroke="#a8acc0" /><path d="M8 8L2 4a7 7 0 0 1 6-3z" fill="#c5c9e8" /><circle cx="8" cy="8" r="2.500" fill="#555a78" /><circle cx="8" cy="8" r="1" fill="#fff" /><path d="M10 11h5v4h-5z" fill="#dde1ea" /></Icon>
          Мой диск (D:)
        </button>
        <button type="button" className={`${task} w-[158px] bg-gradient-to-b from-[#5a98fa] via-[#3c81f3] to-[#3a7bee]`}>
          <Icon><path d="M1 4q0-2 2-2h4l1 2h6v9q0 1-1 1H2q-1 0-1-1z" fill="#f5cf60" stroke="#a97e20" /><path d="M3 7h13l-2 7H1z" fill="#fde995" stroke="#c99b36" strokeWidth=".7" /></Icon>
          10 кл работа с текс...
        </button>
        <button type="button" className={`${task} w-[160px] bg-[#1e52b7] pl-[10px]! shadow-[inset_1px_1px_2px_#123a8c]`}>
          <Icon w={14} h={15}><path d="M3 1h10v13H3z" fill="#fff" stroke="#7897cb" /><path d="M0 3l10-1v11L0 12z" fill="#fff" stroke="#3265b5" /><path d="M2 5l1.500 5.500L5 6l1 4.500L8 4.500" stroke="#1f4fa5" strokeWidth="1.400" /></Icon>
          <b className="text-[#ffd36c]">17</b><span>Microsoft Office ...</span>
          <span className="ml-auto pr-[4px]"><Caret color="#fff" /></span>
        </button>
      </div>
      <span className="ml-auto px-[1px] leading-[16px]">RU</span>
      <div className="ml-[19px] flex h-full w-[93px] items-center bg-[linear-gradient(#4fb9f5,#189bee_15%,#1290e8_60%,#14a4ef_88%,#1074c4)] pl-px">
        <button type="button" aria-label="Показать значки" className="-ml-[9px] h-[18px]"><Icon w={18} h={18}><circle cx="9" cy="9" r="8.500" fill="#2a83e4" stroke="#9fd0fb" /><path d="M11 5L7 9l4 4" stroke="#fff" strokeWidth="2" /></Icon></button>
        <span className="ml-[2px] flex h-[15px] w-[15px] items-center justify-center rounded-[2px] border border-white/70 bg-[#78bce8]"><Icon w={11} h={10}><path d="M1.500 0v7h2V0M5.500 0v7h2V0M9.500 0v7M0 9h11" stroke="#fff" /></Icon></span>
        <span className="ml-[4px] flex"><Icon w={15} h={14}><path d="M0 1h4v12H0z" fill="#fff" /><path d="M0 0h4v5l6-5h5L8 6l5 5H8L4 8v4H0z" fill="#e01818" /><path d="M7 7l6 5V8l1 6H8l2-1z" fill="#111" stroke="#111" /></Icon></span>
        <time className="ml-auto pr-[14px]">16:20</time>
      </div>
    </div>
  );
}

export default function App() {
  return (
    <div className="relative flex h-screen min-h-[480px] flex-col overflow-hidden bg-[#bfdbff]">
      <OfficeOrb />
      <TitleBar />
      <Tabs />
      <Ribbon />
      <HRuler />
      <div className="flex min-h-0 flex-1 overflow-hidden bg-gradient-to-b from-[#a9c6ec] via-[#7d9fd0] via-30% to-[#567db3]">
        <VRuler />
        <div className="w-[23px] shrink-0" />
        <Page />
        <ScrollBar />
      </div>
      <StatusBar />
      <TaskBar />
      <DataPanel />
      <Tip />
    </div>
  );
}
